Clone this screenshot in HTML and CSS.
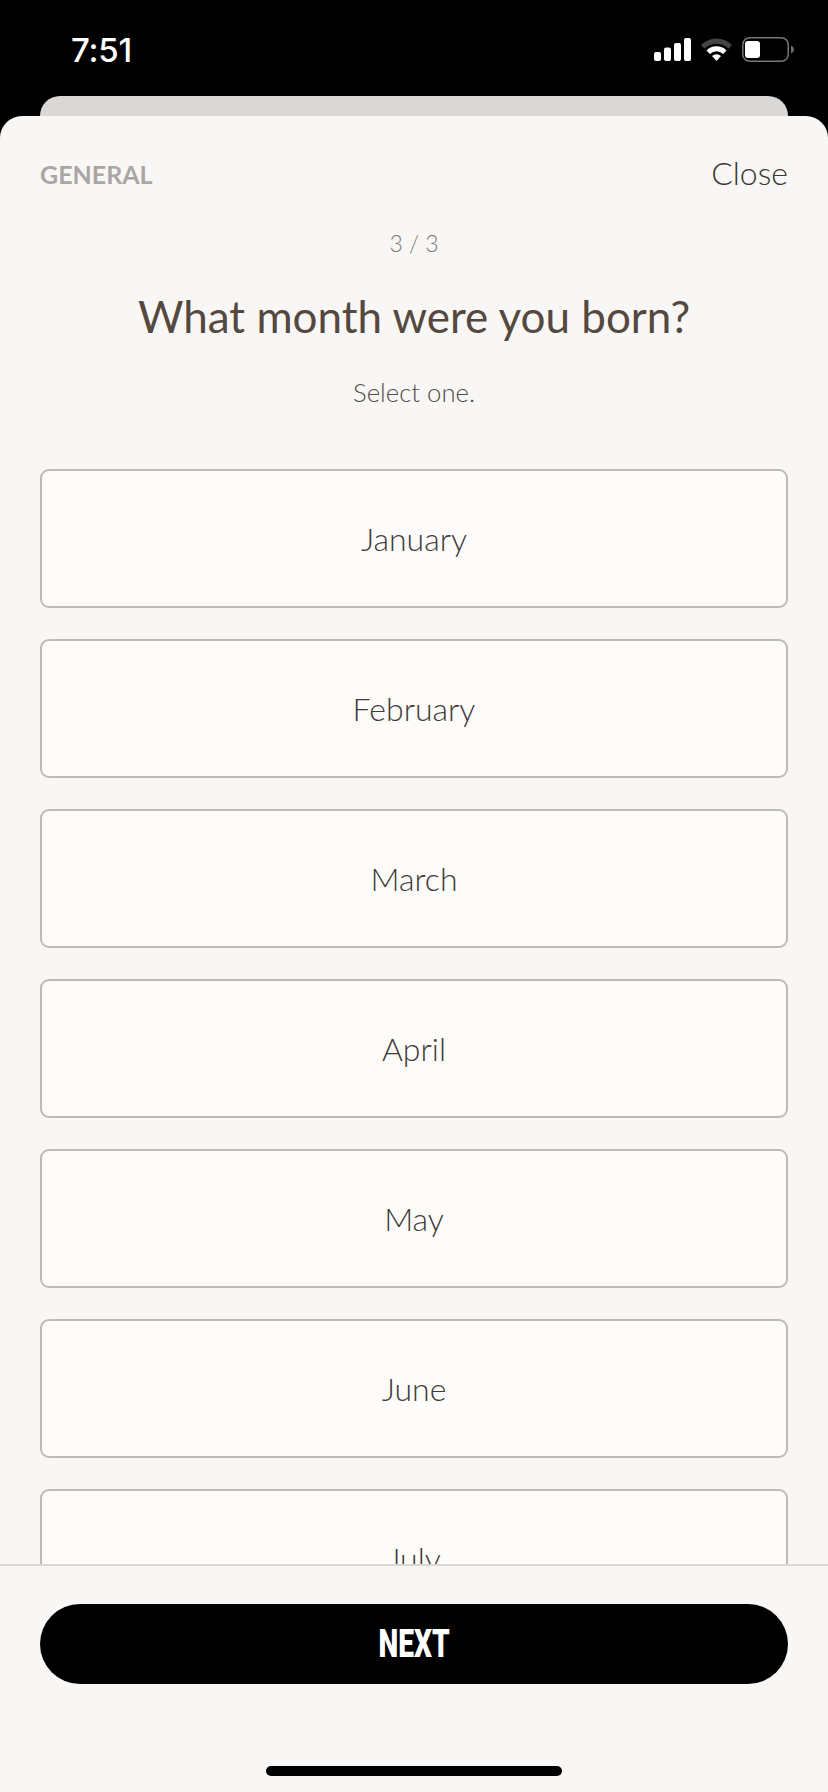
FILE: index.html
```html
<!DOCTYPE html>
<html lang="en">
<head>
<meta charset="utf-8">
<title>What month were you born?</title>
<link rel="stylesheet" href="styles.css">
</head>
<body>
<div class="screen">
  <div class="status">
    <span class="time">7:51</span>
    <div class="status-icons">
      <svg class="signal" width="37" height="23" viewBox="0 0 37 23"><rect x="0" y="14" width="7" height="9" rx="2"/><rect x="10" y="9.500" width="7" height="13.500" rx="2"/><rect x="20" y="5" width="7" height="18" rx="2"/><rect x="30" y="0" width="7" height="23" rx="2"/></svg>
      <svg class="wifi" width="31" height="24" viewBox="0 0 31 24"><path class="wifi-dim" d="M0 8 A22 22 0 0 1 31 8 L27.500 11.700 A17 17 0 0 0 3.500 11.700 Z"/><path class="wifi-on" d="M5.500 13.500 A14 14 0 0 1 25.500 13.500 L22 17 A9 9 0 0 0 9 17 Z"/><path class="wifi-on" d="M11 19 A6.500 6.500 0 0 1 20 19 L15.500 24 Z"/></svg>
      <svg class="battery" width="52" height="25" viewBox="0 0 52 25"><rect class="batt-shell" x="0.750" y="0.750" width="45.500" height="23.500" rx="7"/><rect class="batt-fill" x="3" y="4" width="15" height="17" rx="3"/><path class="batt-cap" d="M49 8.500 C51 9.500 52 11 52 12.500 C52 14 51 15.500 49 16.500 Z"/></svg>
    </div>
  </div>
  <div class="back-card"></div>
  <main class="sheet">
    <div class="scroll">
      <header class="sheet-head">
        <span class="section">GENERAL</span>
        <span class="close">Close</span>
      </header>
      <p class="step">3 / 3</p>
      <h1 class="question">What month were you born?</h1>
      <p class="hint">Select one.</p>
      <div class="options">
        <div class="option">January</div>
        <div class="option">February</div>
        <div class="option">March</div>
        <div class="option">April</div>
        <div class="option">May</div>
        <div class="option">June</div>
        <div class="option">July</div>
      </div>
    </div>
    <footer class="foot">
      <button class="next" type="button"><span class="next-label">NEXT</span></button>
      <div class="home-bar"></div>
    </footer>
  </main>
</div>
</body>
</html>
```
FILE: styles.css
```css
* { box-sizing: border-box; }
html, body { margin: 0; padding: 0; background: #000; }
.screen { width: 828px; height: 1792px; display: flex; flex-direction: column; overflow: hidden; background: #000; font-family: "Lato", "Liberation Sans", sans-serif; }
.status { height: 96px; flex: none; display: flex; justify-content: space-between; align-items: flex-start; padding: 32px 34px 0 71px; }
.time { color: #fff; font-family: "Inter", "Liberation Sans", sans-serif; font-weight: 500; font-size: 33px; line-height: 36px; letter-spacing: -0.2px; }
.status-icons { display: flex; align-items: flex-start; padding-top: 5px; }
.signal { fill: #fff; margin-top: 1px; margin-right: 10px; }
.wifi { margin-right: 10px; }
.wifi-dim { fill: #444; }
.wifi-on { fill: #fff; }
.batt-shell { fill: none; stroke: #7a7673; stroke-width: 1.500; }
.batt-fill { fill: #fff; }
.batt-cap { fill: #6b6866; }
.back-card { height: 20px; flex: none; margin: 0 40px; background: #d9d8d6; border-radius: 20px 20px 0 0; }
.sheet { flex: 1; min-height: 0; display: flex; flex-direction: column; background: #f8f7f5; border-radius: 22px 22px 0 0; }
.scroll { height: 1448px; flex: none; overflow: hidden; padding: 0 40px; }
.sheet-head { display: flex; justify-content: space-between; align-items: center; height: 36px; margin-top: 38px; }
.section { color: #aba6a5; font-weight: 700; font-size: 25px; padding-top: 4px; }
.close { color: #3a3634; font-weight: 300; font-size: 32px; }
.step { margin: 39px 0 0; text-align: center; color: #7d7976; font-weight: 300; font-size: 23px; line-height: 28px; }
.question { margin: 32px 0 0; text-align: center; color: #55483f; font-weight: 400; font-size: 44px; line-height: 54px; }
.hint { margin: 35px 0 0; text-align: center; color: #524c48; font-weight: 300; font-size: 25.7px; line-height: 28px; }
.options { display: flex; flex-direction: column; gap: 31px; margin-top: 63px; }
.option { height: 139px; flex: none; display: flex; align-items: center; justify-content: center; background: #fdfcfa; border: 2px solid #bdbbb9; border-radius: 9px; color: #403a37; font-weight: 300; font-size: 32px; }
.foot { flex: 1; border-top: 2px solid #d9d8d6; padding: 38px 40px 0; display: flex; flex-direction: column; align-items: center; }
.next { width: 100%; height: 80px; background: #000; border: 0; border-radius: 40px; color: #fff; display: flex; align-items: center; justify-content: center; padding: 0; }
.next-label { display: inline-block; font-family: "Roboto", "Liberation Sans", sans-serif; font-weight: 900; font-size: 38px; transform: scaleX(0.74); }
.home-bar { width: 296px; height: 10px; margin-top: 82px; background: #000; border-radius: 5px; }
```
